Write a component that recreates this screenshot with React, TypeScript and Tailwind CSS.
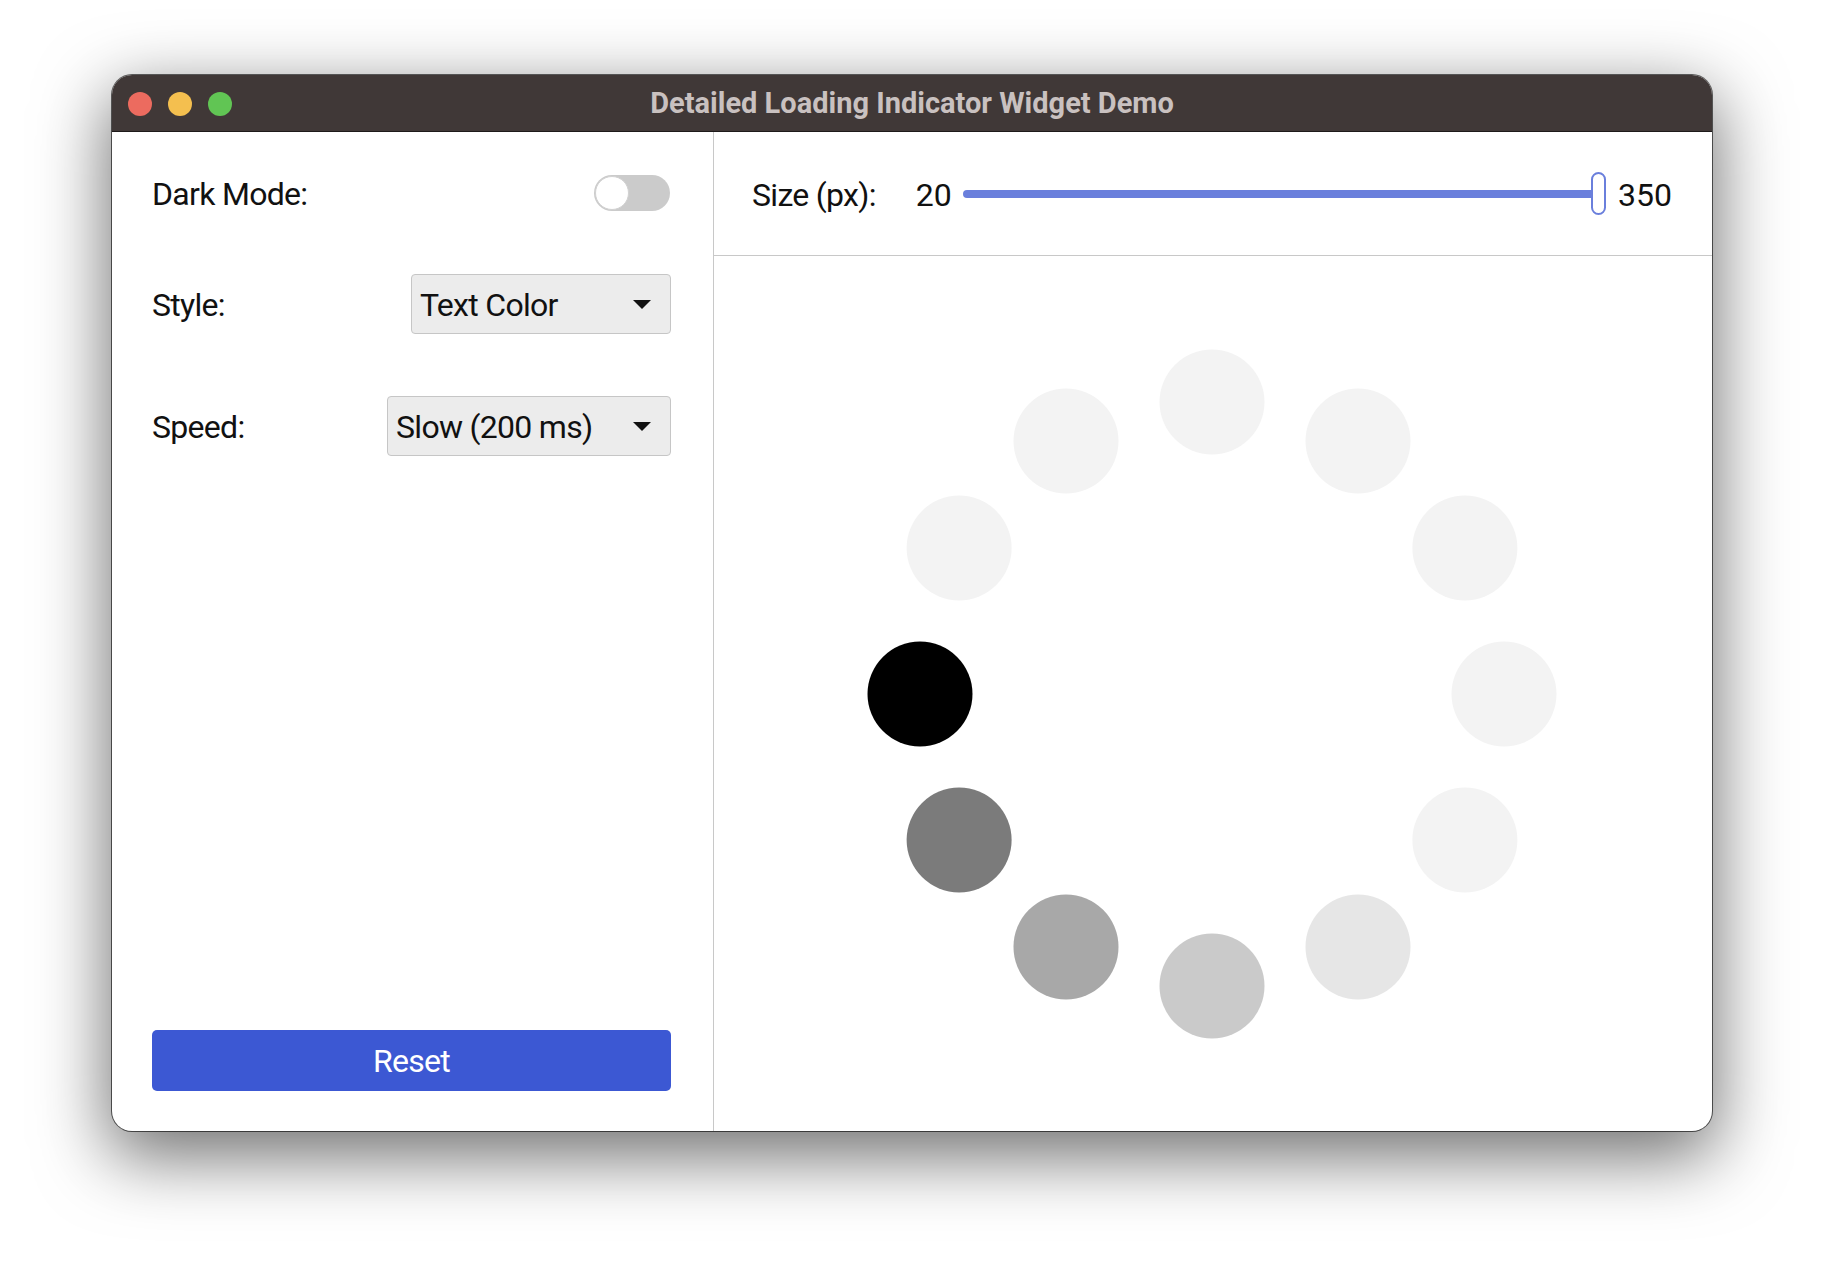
import React from "react"

const FONT = { fontFamily: "Roboto, 'Noto Sans', sans-serif" }

// spinner: 12 dots, the dark one at 9 o'clock, tail fading downward
const DOT_COLORS = ["#000000", "#7b7b7b", "#a8a8a8", "#cacaca", "#e6e6e6", "#f3f3f3", "#f3f3f3", "#f3f3f3", "#f3f3f3", "#f3f3f3", "#f3f3f3", "#f3f3f3"]

function Spinner() {
  const size = 700
  const c = size / 2
  const r = 292
  const dot = 52.5
  return (
    <svg width={size} height={size} viewBox={`0 0 ${size} ${size}`}>
      {DOT_COLORS.map((color, i) => {
        const a = ((180 + i * 30) * Math.PI) / 180
        return <circle key={i} cx={c + r * Math.cos(a)} cy={c - r * Math.sin(a)} r={dot} fill={color} />
      })}
    </svg>
  )
}

function Combo({ label, width }: { label: string; width: string }) {
  return (
    <div className={`${width} h-[60px] flex items-center justify-between pl-[8px] pr-[19px] bg-[#ececec] border border-[#c6c6c6] rounded-[4px]`}>
      <span className="text-[32px] tracking-[-0.7px] text-[#111] pt-[2px]">{label}</span>
      <svg width="18" height="9" viewBox="0 0 18 9">
        <path d="M0 0 L18 0 L9 9 Z" fill="#111" />
      </svg>
    </div>
  )
}

export default function App() {
  return (
    <div className="min-h-[1280px] bg-white pt-[75px]" style={FONT}>
      <div className="mx-auto w-[1600px] rounded-[20px] overflow-hidden ring-1 ring-black/60 shadow-[0_22px_70px_4px_rgba(0,0,0,0.56)] bg-white">
        {/* title bar */}
        <div className="relative h-[57px] bg-[#403837] border-b border-[#1e1a1a] flex items-center justify-center pt-[2px]">
          <div className="absolute left-[16px] top-[17px] flex gap-[16px]">
            <div className="w-[24px] h-[24px] rounded-full bg-[#ec6b5f]" />
            <div className="w-[24px] h-[24px] rounded-full bg-[#f4bf4f]" />
            <div className="w-[24px] h-[24px] rounded-full bg-[#61c554]" />
          </div>
          <span className="text-[29px] font-bold text-[#c9c1c0]">Detailed Loading Indicator Widget Demo</span>
        </div>

        <div className="flex h-[999px]">
          {/* left controls */}
          <div className="w-[602px] border-r border-[#c8c8c8] flex flex-col pl-[40px] pr-[42px] pt-[31px] pb-[40px]">
            <div className="h-[60px] flex items-center justify-between">
              <span className="text-[32px] tracking-[-0.7px] text-[#111] pt-[2px]">Dark Mode:</span>
              <div className="w-[76px] h-[36px] rounded-full bg-[#cbcbcb] flex items-center pl-[1px] mr-[1px]">
                <div className="w-[34px] h-[34px] rounded-full bg-white border border-[#d2d2d2]" />
              </div>
            </div>
            <div className="h-[60px] mt-[51px] flex items-center justify-between">
              <span className="text-[32px] tracking-[-0.7px] text-[#111] pt-[2px]">Style:</span>
              <Combo label="Text Color" width="w-[260px]" />
            </div>
            <div className="h-[60px] mt-[62px] flex items-center justify-between">
              <span className="text-[32px] tracking-[-0.7px] text-[#111] pt-[2px]">Speed:</span>
              <Combo label="Slow (200 ms)" width="w-[284px]" />
            </div>
            <div className="flex-1" />
            <button className="h-[61px] w-full rounded-[5px] bg-[#3c58d3] text-white text-[32px] tracking-[-0.7px]">Reset</button>
          </div>

          {/* preview */}
          <div className="flex-1 flex flex-col">
            <div className="h-[124px] border-b border-[#c8c8c8] flex items-center pl-[38px] pr-[40px]">
              <span className="text-[32px] tracking-[-0.7px] text-[#111] pt-[2px]">Size (px):</span>
              <span className="text-[32px] text-[#111] ml-[40px] pt-[2px]">20</span>
              <div className="flex-1 flex items-center ml-[11px]">
                <div className="flex-1 h-[8px] rounded-full bg-[#6a7fdc]" />
                <div className="w-[15px] h-[43px] -ml-[4px] rounded-full bg-white border-2 border-[#6a7fdc]" />
              </div>
              <span className="text-[32px] text-[#111] ml-[12px] pt-[2px]">350</span>
            </div>
            <div className="flex-1 flex items-center justify-center pr-[2px]">
              <Spinner />
            </div>
          </div>
        </div>
      </div>
    </div>
  )
}
